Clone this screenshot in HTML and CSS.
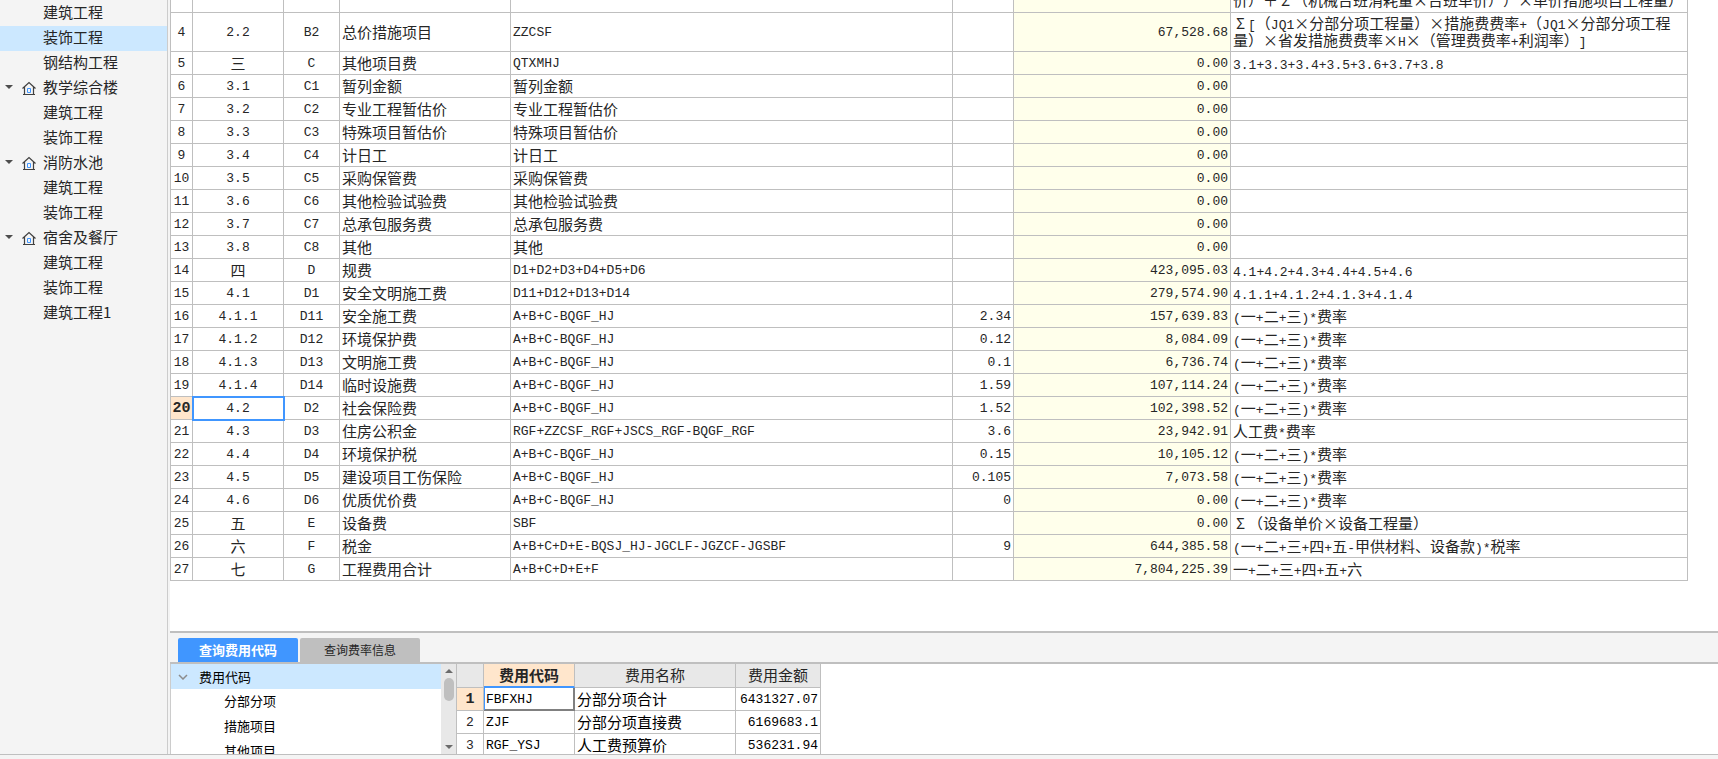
FILE: index.html
```html
<!DOCTYPE html>
<html lang="zh-CN">
<head>
<meta charset="utf-8">
<title>费用汇总</title>
<link rel="stylesheet" href="styles.css">
</head>
<body>
<svg class="defs" aria-hidden="true">
  <symbol id="house" viewBox="0 0 14 14">
    <path d="M.5 7.500 7 1.500l6.500 6M2.500 6v7M11.500 6v7M1 13.500h12" fill="none" stroke="#404040" stroke-width="1.200"/>
    <path d="M5.500 7.500h3v4h-3z" fill="none" stroke="#4096ff"/>
  </symbol>
</svg>
<div class="app">
  <nav class="sidebar">
    <ul class="tree">
      <li class="leaf">建筑工程</li>
      <li class="leaf selected">装饰工程</li>
      <li class="leaf">钢结构工程</li>
      <li class="branch"><span class="arrow"></span><svg class="house"><use href="#house"/></svg>教学综合楼</li>
      <li class="leaf">建筑工程</li>
      <li class="leaf">装饰工程</li>
      <li class="branch"><span class="arrow"></span><svg class="house"><use href="#house"/></svg>消防水池</li>
      <li class="leaf">建筑工程</li>
      <li class="leaf">装饰工程</li>
      <li class="branch"><span class="arrow"></span><svg class="house"><use href="#house"/></svg>宿舍及餐厅</li>
      <li class="leaf">建筑工程</li>
      <li class="leaf">装饰工程</li>
      <li class="leaf">建筑工程1</li>
    </ul>
  </nav>
  <main class="main">
    <section class="summary">
      <table class="grid fees">
        <colgroup><col class="w-no"><col class="w-seq"><col class="w-code"><col class="w-name"><col class="w-base"><col class="w-rate"><col class="w-sum"><col></colgroup>
        <tbody>
        <tr class="cut"><td></td><td></td><td></td><td></td><td></td><td></td><td></td><td><div class="tail">价）＋<span class="wide">Σ</span>（机械台班消耗量<span class="wide">×</span>台班单价））<span class="wide">×</span>单价措施项目工程量）</div></td></tr>
        <tr class="tall"><td>4</td><td>2.2</td><td>B2</td><td>总价措施项目</td><td>ZZCSF</td><td></td><td>67,528.68</td><td><span class="wide">Σ</span><span class="m">[</span>（<span class="m">JQ1</span><span class="wide">×</span>分部分项工程量）<span class="wide">×</span>措施费费率<span class="m">+</span>（<span class="m">JQ1</span><span class="wide">×</span>分部分项工程<br>量）<span class="wide">×</span>省发措施费费率<span class="wide">×</span><span class="m">H</span><span class="wide">×</span>（管理费费率<span class="m">+</span>利润率）<span class="m">]</span></td></tr>
        <tr><td>5</td><td class="cn">三</td><td>C</td><td>其他项目费</td><td>QTXMHJ</td><td></td><td>0.00</td><td><span class="m">3.1+3.3+3.4+3.5+3.6+3.7+3.8</span></td></tr>
        <tr><td>6</td><td>3.1</td><td>C1</td><td>暂列金额</td><td class="cn">暂列金额</td><td></td><td>0.00</td><td></td></tr>
        <tr><td>7</td><td>3.2</td><td>C2</td><td>专业工程暂估价</td><td class="cn">专业工程暂估价</td><td></td><td>0.00</td><td></td></tr>
        <tr><td>8</td><td>3.3</td><td>C3</td><td>特殊项目暂估价</td><td class="cn">特殊项目暂估价</td><td></td><td>0.00</td><td></td></tr>
        <tr><td>9</td><td>3.4</td><td>C4</td><td>计日工</td><td class="cn">计日工</td><td></td><td>0.00</td><td></td></tr>
        <tr><td>10</td><td>3.5</td><td>C5</td><td>采购保管费</td><td class="cn">采购保管费</td><td></td><td>0.00</td><td></td></tr>
        <tr><td>11</td><td>3.6</td><td>C6</td><td>其他检验试验费</td><td class="cn">其他检验试验费</td><td></td><td>0.00</td><td></td></tr>
        <tr><td>12</td><td>3.7</td><td>C7</td><td>总承包服务费</td><td class="cn">总承包服务费</td><td></td><td>0.00</td><td></td></tr>
        <tr><td>13</td><td>3.8</td><td>C8</td><td>其他</td><td class="cn">其他</td><td></td><td>0.00</td><td></td></tr>
        <tr><td>14</td><td class="cn">四</td><td>D</td><td>规费</td><td>D1+D2+D3+D4+D5+D6</td><td></td><td>423,095.03</td><td><span class="m">4.1+4.2+4.3+4.4+4.5+4.6</span></td></tr>
        <tr><td>15</td><td>4.1</td><td>D1</td><td>安全文明施工费</td><td>D11+D12+D13+D14</td><td></td><td>279,574.90</td><td><span class="m">4.1.1+4.1.2+4.1.3+4.1.4</span></td></tr>
        <tr><td>16</td><td>4.1.1</td><td>D11</td><td>安全施工费</td><td>A+B+C-BQGF_HJ</td><td>2.34</td><td>157,639.83</td><td><span class="m">(</span>一<span class="m">+</span>二<span class="m">+</span>三<span class="m">)*</span>费率</td></tr>
        <tr><td>17</td><td>4.1.2</td><td>D12</td><td>环境保护费</td><td>A+B+C-BQGF_HJ</td><td>0.12</td><td>8,084.09</td><td><span class="m">(</span>一<span class="m">+</span>二<span class="m">+</span>三<span class="m">)*</span>费率</td></tr>
        <tr><td>18</td><td>4.1.3</td><td>D13</td><td>文明施工费</td><td>A+B+C-BQGF_HJ</td><td>0.1</td><td>6,736.74</td><td><span class="m">(</span>一<span class="m">+</span>二<span class="m">+</span>三<span class="m">)*</span>费率</td></tr>
        <tr><td>19</td><td>4.1.4</td><td>D14</td><td>临时设施费</td><td>A+B+C-BQGF_HJ</td><td>1.59</td><td>107,114.24</td><td><span class="m">(</span>一<span class="m">+</span>二<span class="m">+</span>三<span class="m">)*</span>费率</td></tr>
        <tr><td class="current">20</td><td class="focus">4.2</td><td>D2</td><td>社会保险费</td><td>A+B+C-BQGF_HJ</td><td>1.52</td><td>102,398.52</td><td><span class="m">(</span>一<span class="m">+</span>二<span class="m">+</span>三<span class="m">)*</span>费率</td></tr>
        <tr><td>21</td><td>4.3</td><td>D3</td><td>住房公积金</td><td>RGF+ZZCSF_RGF+JSCS_RGF-BQGF_RGF</td><td>3.6</td><td>23,942.91</td><td>人工费<span class="m">*</span>费率</td></tr>
        <tr><td>22</td><td>4.4</td><td>D4</td><td>环境保护税</td><td>A+B+C-BQGF_HJ</td><td>0.15</td><td>10,105.12</td><td><span class="m">(</span>一<span class="m">+</span>二<span class="m">+</span>三<span class="m">)*</span>费率</td></tr>
        <tr><td>23</td><td>4.5</td><td>D5</td><td>建设项目工伤保险</td><td>A+B+C-BQGF_HJ</td><td>0.105</td><td>7,073.58</td><td><span class="m">(</span>一<span class="m">+</span>二<span class="m">+</span>三<span class="m">)*</span>费率</td></tr>
        <tr><td>24</td><td>4.6</td><td>D6</td><td>优质优价费</td><td>A+B+C-BQGF_HJ</td><td>0</td><td>0.00</td><td><span class="m">(</span>一<span class="m">+</span>二<span class="m">+</span>三<span class="m">)*</span>费率</td></tr>
        <tr><td>25</td><td class="cn">五</td><td>E</td><td>设备费</td><td>SBF</td><td></td><td>0.00</td><td><span class="wide">Σ</span>（设备单价<span class="wide">×</span>设备工程量）</td></tr>
        <tr><td>26</td><td class="cn">六</td><td>F</td><td>税金</td><td>A+B+C+D+E-BQSJ_HJ-JGCLF-JGZCF-JGSBF</td><td>9</td><td>644,385.58</td><td><span class="m">(</span>一<span class="m">+</span>二<span class="m">+</span>三<span class="m">+</span>四<span class="m">+</span>五<span class="m">-</span>甲供材料、设备款<span class="m">)*</span>税率</td></tr>
        <tr><td>27</td><td class="cn">七</td><td>G</td><td>工程费用合计</td><td>A+B+C+D+E+F</td><td></td><td>7,804,225.39</td><td>一<span class="m">+</span>二<span class="m">+</span>三<span class="m">+</span>四<span class="m">+</span>五<span class="m">+</span>六</td></tr>
        </tbody>
      </table>
    </section>
    <div class="tabs" role="tablist">
      <button class="tab active" type="button" role="tab" aria-selected="true">查询费用代码</button>
      <button class="tab" type="button" role="tab" aria-selected="false">查询费率信息</button>
    </div>
    <section class="lookup">
      <ul class="codes">
        <li class="root"><svg class="chevron" viewBox="0 0 10 6"><path d="M1 1l4 4 4-4" fill="none" stroke="#8c8c8c" stroke-width="1.500"/></svg>费用代码</li>
        <li>分部分项</li>
        <li>措施项目</li>
        <li>其他项目</li>
      </ul>
      <div class="scrollbar" aria-hidden="true"><span class="up"></span><span class="thumb"></span><span class="down"></span></div>
      <table class="grid values">
        <colgroup><col class="v-no"><col class="v-code"><col class="v-name"><col class="v-sum"></colgroup>
        <thead><tr><th></th><th class="current">费用代码</th><th>费用名称</th><th>费用金额</th></tr></thead>
        <tbody>
          <tr><td class="current">1</td><td class="focus">FBFXHJ</td><td>分部分项合计</td><td>6431327.07</td></tr>
          <tr><td>2</td><td>ZJF</td><td>分部分项直接费</td><td>6169683.1</td></tr>
          <tr><td>3</td><td>RGF_YSJ</td><td>人工费预算价</td><td>536231.94</td></tr>
        </tbody>
      </table>
    </section>
  </main>
</div>
<footer class="status"></footer>
</body>
</html>
```

FILE: styles.css
```css
* { box-sizing: border-box; }

:root {
  --line: #bfbfbf;
  --chrome: #f4f4f4;
  --select: #cce8ff;
  --accent: #4096ff;
  --current: #ffe6cc;
  --cjk: "Noto Sans CJK SC", sans-serif;
  --mono: "Liberation Mono", "Noto Sans CJK SC", monospace;
}

body {
  margin: 0;
  height: 100vh;
  display: flex;
  flex-direction: column;
  overflow: hidden;
  background: #fff;
  color: #262626;
  font: 400 15px/17px var(--cjk);
  text-spacing-trim: space-all;
}

ul { list-style: none; margin: 0; padding: 0; }
.defs { display: none; }

.m { font-family: var(--mono); font-size: 13px; line-height: 1px; }
.wide { display: inline-block; width: 15px; text-align: center; }

.app { flex: 1; min-height: 0; display: flex; background: var(--chrome); }

/* project tree */
.sidebar {
  flex: none;
  width: 168px;
  margin-right: 2px;
  border-right: 1px solid #ccc;
  overflow: hidden;
}
.tree { padding-top: 1px; }
.tree li { display: flex; align-items: center; height: 25px; padding-bottom: 4px; }
.tree .leaf { padding-left: 43px; }
.tree .selected { background: var(--select); }
.tree .branch { padding-left: 5px; }
.arrow { border: 4px solid transparent; border-top-color: #4d4d4d; border-bottom: 0; margin-right: 9px; }
.house { width: 14px; height: 14px; margin: 3px 7px 0 0; }

.main { flex: 1; min-width: 0; display: flex; flex-direction: column; }

/* shared table look */
.grid { border-collapse: separate; border-spacing: 0; table-layout: fixed; border-left: 1px solid var(--line); }
.grid td, .grid th {
  height: 23px;
  padding: 0 2px;
  border-right: 1px solid var(--line);
  border-bottom: 1px solid var(--line);
  white-space: nowrap;
  overflow: hidden;
}
.grid .current { background: var(--current); font-weight: 700; }

/* fee summary */
.summary { flex: 1; min-height: 0; overflow: hidden; padding-right: 30px; background: #fff; }
.fees { width: 100%; }
.fees td { font: 400 13px/17px var(--mono); }
.fees td:nth-child(-n+3) { text-align: center; padding: 0; }
.fees td:nth-child(4), .fees td:nth-child(8), .fees td.cn { padding-bottom: 2px; font: 400 15px/17px var(--cjk); }
.fees td:nth-child(6), .fees td:nth-child(7) { text-align: right; }
.fees td:nth-child(7) { background: #ffffeb; }
.fees td.current { font-size: 15px; font-weight: 700; }
.fees td.focus { outline: 2px solid var(--accent); outline-offset: -1px; }
.fees .cut td { height: 13px; padding-bottom: 0; }
.fees .tall td { height: 39px; }
.tail { display: flex; align-items: flex-end; height: 12px; padding-bottom: 4px; }
.w-no { width: 22px; }
.w-seq { width: 91px; }
.w-code { width: 56px; }
.w-name { width: 171px; }
.w-base { width: 442px; }
.w-rate { width: 61px; }
.w-sum { width: 217px; }

/* lookup tabs */
.tabs {
  flex: none;
  display: flex;
  align-items: flex-end;
  gap: 2px;
  height: 33px;
  padding-left: 8px;
  border-top: 2px solid var(--line);
  border-bottom: 2px solid var(--line);
}
.tab {
  width: 120px;
  height: 24px;
  padding: 0;
  border: 0;
  border-radius: 2px 2px 0 0;
  background: var(--line);
  color: #262626;
  font: 400 12px/24px var(--cjk);
}
.tab.active { background: var(--accent); color: #fff; font-size: 13px; font-weight: 700; }

/* lookup panel */
.lookup { flex: none; display: flex; align-items: flex-start; height: 90px; overflow: hidden; background: #fff; }
.codes { width: 271px; height: 90px; overflow: hidden; border-left: 1px solid #ccc; color: #000; font: 400 13px/24px var(--cjk); }
.codes li { height: 25px; padding-left: 53px; }
.codes .root { display: flex; align-items: center; gap: 11px; padding-left: 7px; background: var(--select); }
.chevron { width: 10px; height: 6px; }
.scrollbar { display: flex; flex-direction: column; align-items: center; width: 15px; height: 90px; padding: 5px 0; background: #e8e8e8; }
.up { border: 4px solid transparent; border-top: 0; border-bottom-color: #6b6b6b; }
.thumb { width: 10px; height: 23px; margin-top: 5px; border-radius: 5px; background: var(--line); }
.down { margin-top: auto; border: 4px solid transparent; border-top-color: #6b6b6b; border-bottom: 0; }

.values { width: 365px; color: #000; }
.values td { font: 400 13px/17px var(--mono); }
.values th { height: 24px; padding-bottom: 2px; background: #e8e8e8; color: #262626; font-weight: 400; }
.values td:nth-child(1) { text-align: center; color: #262626; }
.values td:nth-child(3) { padding-bottom: 2px; font: 400 15px/17px var(--cjk); }
.values td:nth-child(4) { text-align: right; }
.values td.current { font-size: 15px; font-weight: 700; }
.values th.current { border-bottom: 2px solid var(--accent); }
.values td.focus { box-shadow: inset 1px 0 var(--accent), inset -1px -1px #808080; border-color: #808080; }
.v-no { width: 27px; }
.v-code { width: 91px; }
.v-name { width: 161px; }
.v-sum { width: 85px; }

.status { flex: none; height: 5px; border-top: 1px solid var(--line); background: var(--chrome); }
```
